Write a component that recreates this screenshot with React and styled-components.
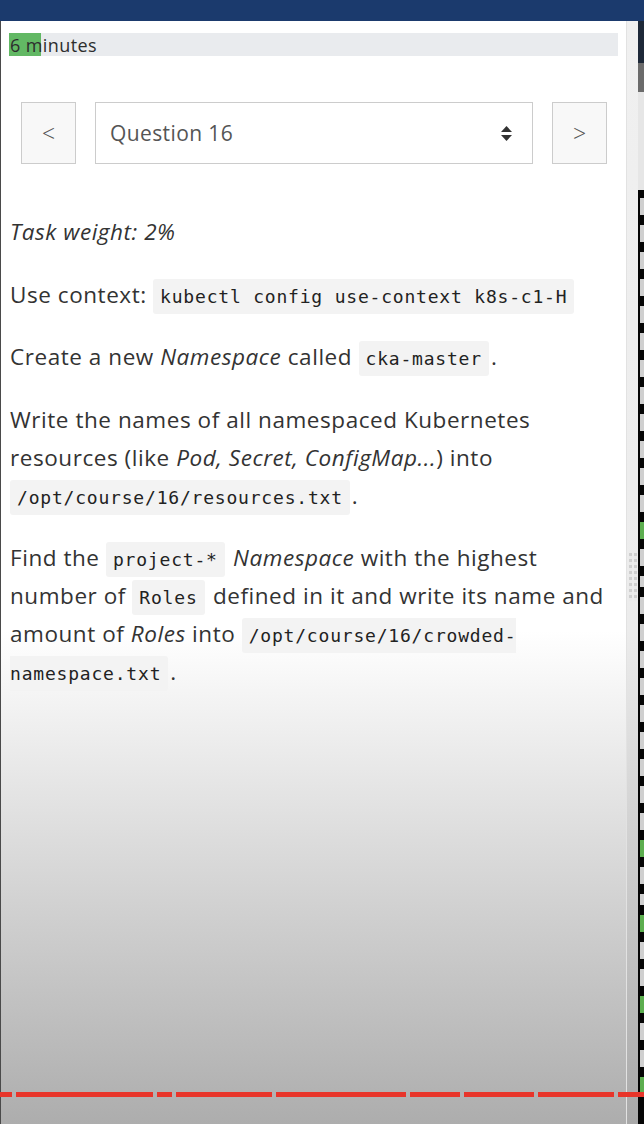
import React from 'react';
import styled, { createGlobalStyle } from 'styled-components';

//-- GLOBAL --//
const Global = createGlobalStyle`
  html, body {
    margin: 0;
    padding: 0;
    overflow: hidden;
  }
  body {
    font-family: "Open Sans", "Noto Sans", sans-serif;
  }
`;

const colors = {
  navy: '#1b3a6d',
  text: '#333',
  muted: '#555',
  border: '#ccc',
  codeBg: '#f3f3f3',
  green: '#62b864',
  dash: '#e8352a',
};

//-- STYLES --//
const Page = styled.div`
  width: 644px;
  height: 1124px;
  display: grid;
  grid-template-rows: 21px 1fr;
  position: relative;
  overflow: hidden;
`;

const TopBar = styled.div`
  background: ${colors.navy};
`;

const Body = styled.div`
  display: flex;
  min-height: 0;
`;

const Panel = styled.main`
  flex: 1;
  box-sizing: border-box;
  padding: 12px 8px 0 8px;
  border-left: 1px solid #4a4a4a;
  background: linear-gradient(to bottom, #fff 0, #fff 610px, #d2d2d2 880px, #adadad 1103px);
  color: ${colors.text};
`;

const Progress = styled.div`
  height: 23px;
  background: #e9ebee;
  position: relative;
  display: flex;
  align-items: center;
`;

const ProgressFill = styled.div`
  position: absolute;
  left: 0;
  top: 0;
  bottom: 0;
  background: ${colors.green};
`;

const ProgressLabel = styled.span`
  position: relative;
  padding-left: 1px;
  font-size: 18px;
  letter-spacing: 0.4px;
  color: #2d2d2d;
`;

const Nav = styled.div`
  display: flex;
  gap: 19px;
  height: 62px;
  margin: 46px 11px 0 12px;
`;

const NavButton = styled.button`
  width: 55px;
  flex: none;
  border: 1px solid ${colors.border};
  background: #f8f8f8;
  color: ${colors.muted};
  font-family: "Open Sans", sans-serif;
  font-size: 23px;
  font-weight: 300;
  padding: 0;
`;

const Select = styled.div`
  flex: 1;
  display: flex;
  align-items: center;
  justify-content: space-between;
  box-sizing: border-box;
  padding: 0 20px 0 14px;
  border: 1px solid ${colors.border};
  background: #fff;
  font-size: 21px;
  letter-spacing: 0.4px;
  color: ${colors.muted};
`;

const Content = styled.div`
  padding: 49px 0 0 1px;
  font-size: 22.5px;
  letter-spacing: 0.55px;
  line-height: 38px;
`;

const Para = styled.p`
  margin: 0 0 24.5px 0;
  font-style: ${p => (p.italic ? 'italic' : 'normal')};
`;

const Code = styled.code`
  font-family: "DejaVu Sans Mono", "Liberation Mono", monospace;
  font-size: 18px;
  line-height: 1;
  letter-spacing: 0.8px;
  background: ${colors.codeBg};
  padding: 7px 7px;
  border-radius: 3px;
  color: #222;
  margin-right: 2px;
`;

const Scrollbar = styled.div`
  width: 12px;
  flex: none;
  background: linear-gradient(to bottom, #f0f0f0 0, #ececec 610px, #c8c8c8 880px, #a8a8a8 1103px);
  border-left: 1px solid #e2e2e2;
  box-sizing: border-box;
  display: flex;
  justify-content: center;
  padding-top: 532px;
`;

const Grip = styled.div`
  width: 8px;
  height: 48px;
  background: repeating-linear-gradient(to bottom, #cfcfcf 0 3px, transparent 3px 6px),
    #eaeaea;
  -webkit-mask: linear-gradient(to right, #000 0 3px, transparent 3px 5px, #000 5px 8px);
  mask: linear-gradient(to right, #000 0 3px, transparent 3px 5px, #000 5px 8px);
`;

const Terminal = styled.div`
  width: 6px;
  flex: none;
  display: flex;
  flex-direction: column;
  background: #050505;
`;

const TermHead = styled.div`
  height: ${p => p.h}px;
  flex: none;
  background: ${p => p.bg};
`;

const TermLines = styled.div`
  display: flex;
  flex-direction: column;
  gap: 10px;
  padding: 8px 0 0 2px;
`;

const TermGlyph = styled.span`
  display: block;
  height: ${p => (p.short ? 11 : 17)}px;
  background: ${p => (p.green ? '#5cae4f' : '#cfcfcf')};
`;

const Dashes = styled.svg`
  position: absolute;
  left: 0;
  top: 1092px;
`;

//-- DATA --//
const glyphs = [
  0, 0, 0, 0, 0, 0, 0, 0, 0, 0, 0, 0, 1, 0, 2, 0, 0, 0, 0, 0, 0, 0, 0, 0, 1, 0, 2, 1, 0, 0, 1, 0, 0, 1,
];
const dashes = [[0, 12], [16, 153], [157, 172], [176, 272], [276, 406], [410, 460], [464, 534], [538, 614], [618, 644]];

//-- COMPONENTS --//
const UpDown = () => (
  <svg width="11" height="15" viewBox="0 0 11 15">
    <path d="M5.5 0 L11 6 H0 Z" fill="#333" />
    <path d="M0 9 H11 L5.5 15 Z" fill="#333" />
  </svg>
);

const App = () => {
  return (
    <Page>
      <Global />
      <TopBar />
      <Body>
        <Panel>
          <Progress>
            <ProgressFill style={{ width: 32 }} />
            <ProgressLabel>6 minutes</ProgressLabel>
          </Progress>

          <Nav>
            <NavButton>&lt;</NavButton>
            <Select>
              <span>Question 16</span>
              <UpDown />
            </Select>
            <NavButton>&gt;</NavButton>
          </Nav>

          <Content>
            <Para italic>Task weight: 2%</Para>
            <Para>
              Use context: <Code>kubectl config use-context k8s-c1-H</Code>
            </Para>
            <Para>
              Create a new <i>Namespace</i> called <Code>cka-master</Code>.
            </Para>
            <Para>
              Write the names of all namespaced Kubernetes resources (like <i>Pod, Secret, ConfigMap...</i>) into{' '}
              <Code>/opt/course/16/resources.txt</Code>.
            </Para>
            <Para>
              Find the <Code>project-*</Code> <i>Namespace</i> with the highest number of <Code>Roles</Code> defined in
              it and write its name and amount of <i>Roles</i> into <Code>/opt/course/16/crowded-namespace.txt</Code>.
            </Para>
          </Content>
        </Panel>

        <Scrollbar>
          <Grip />
        </Scrollbar>

        <Terminal>
          <TermHead h={42} bg="#1d2838" />
          <TermHead h={29} bg="#6b6b6b" />
          <TermHead h={98} bg="#e6e6e6" />
          <TermLines>
            {glyphs.map((g, i) => (
              <TermGlyph key={i} green={g === 1} short={g === 2} />
            ))}
          </TermLines>
        </Terminal>
      </Body>

      <Dashes width="644" height="5">
        {dashes.map(([a, b]) => (
          <rect key={a} x={a} y="0" width={b - a} height="5" fill={colors.dash} />
        ))}
      </Dashes>
    </Page>
  );
};

export default App;
